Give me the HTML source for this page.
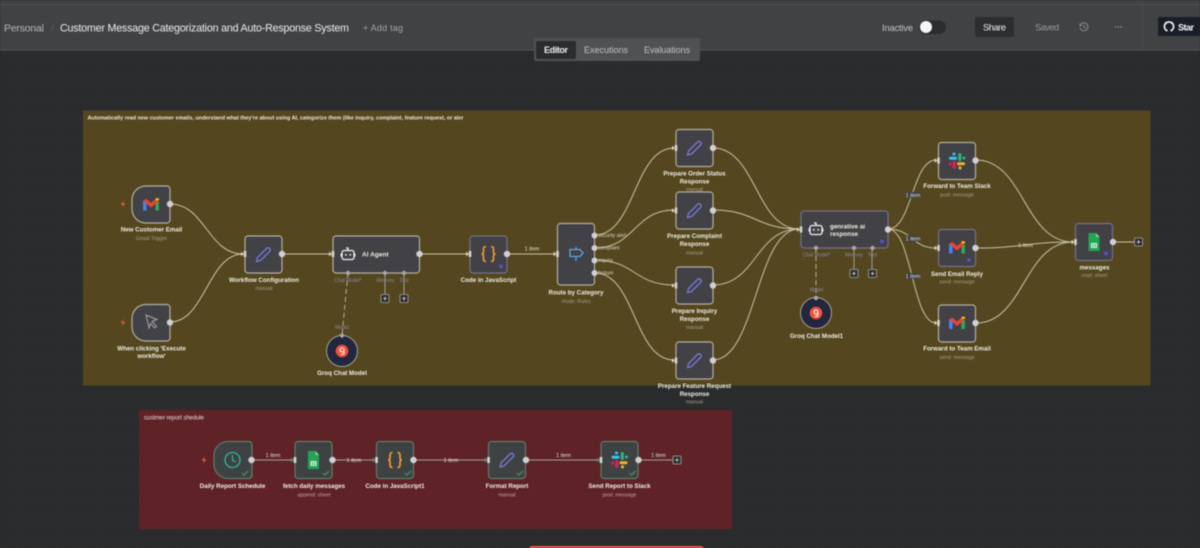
<!DOCTYPE html>
<html><head><meta charset="utf-8"><title>Workflow</title>
<style>
html,body{margin:0;padding:0;width:1200px;height:548px;overflow:hidden;background:#2a2b2c}
svg{display:block;filter:blur(.4px)}
text{font-family:"Liberation Sans",sans-serif}
.l{font-size:6.2px;font-weight:700;fill:#efece0;text-anchor:middle}
.s{font-size:5.2px;fill:#a39d88;text-anchor:middle}
.s2{font-size:5.2px;fill:#bfa6a6;text-anchor:middle}
.p{font-size:5px;fill:#8d88a8;text-anchor:middle}
.o{font-size:5px;fill:#d8d4c4}
.i{font-size:5.4px;fill:#e6e3d6;text-anchor:middle}
.e{fill:none;stroke:#c8c2a4;stroke-width:1}
.r{fill:none;stroke:#98a596;stroke-width:1}
.n{fill:#414146;stroke:#b3b0a0;stroke-width:1.2}
.np{fill:#414146;stroke:#75708f;stroke-width:1.2}
.ng{fill:#3f4243;stroke:#5f7d66;stroke-width:1.2}
.d{fill:#d0d0d4}
.t{fill:#dcdcdc}
</style></head>
<body>
<svg width="1200" height="548" viewBox="0 0 1200 548" xmlns="http://www.w3.org/2000/svg">
<defs>
<pattern id="dots" width="5" height="5" patternUnits="userSpaceOnUse"><rect width="5" height="5" fill="#2a2b2c"/><rect x="2" y="2" width="1" height="1" fill="#313233"/></pattern>
<g id="pencil"><path d="M-7 7L-6 3L3-6Q4.500-7.500 6-6Q7.500-4.500 6-3L-3 6Z" fill="none" stroke="#7b78d6" stroke-width="1.300"/></g>
<g id="gmail" fill="none" stroke-width="3.500"><path d="M-6.200-4V6" stroke="#4285f4"/><path d="M6.200-3V6" stroke="#34a853"/><path d="M-6.200-4.500L0 .8L6.200-4.500" stroke="#ea4335"/><path d="M4.500-5.200L8-5.200" stroke="#fbbc04" stroke-width="2.200"/></g>
<g id="slack" fill="none" stroke-width="3" stroke-linecap="round"><path d="M-6.500-2.800H-1.500M-3-7V-7" stroke="#36c5f0"/><path d="M2.800-6.500V-1.500M6.800-3H7" stroke="#2eb67d"/><path d="M1.500 2.800H6.500M3 6.800V7" stroke="#ecb22e"/><path d="M-2.800 1.500V6.500M-7 3H-6.800" stroke="#e01e5a"/></g>
<g id="sheet"><path d="M-5.500-9H2L5.500-5V9H-5.500Z" fill="#23a455"/><path d="M2-9L5.500-5H2Z" fill="#8ed1a5"/><rect x="-3" y="1" width="6" height="5" fill="#e6f4ea"/><rect x="-1.900" y="2" width="1.500" height="1.200" fill="#23a455"/><rect x=".4" y="2" width="1.500" height="1.200" fill="#23a455"/><rect x="-1.900" y="3.900" width="1.500" height="1.200" fill="#23a455"/><rect x=".4" y="3.900" width="1.500" height="1.200" fill="#23a455"/></g>
<g id="code" fill="none" stroke="#f5a02a" stroke-width="1.600"><path d="M-2.500-7.500Q-5-7.500-5-5V-2Q-5 0-7 0Q-5 0-5 2V5Q-5 7.500-2.500 7.500"/><path d="M2.500-7.500Q5-7.500 5-5V-2Q5 0 7 0Q5 0 5 2V5Q5 7.500 2.500 7.500"/></g>
<g id="robot" fill="none" stroke="#f2f2f2" stroke-width="1.300"><rect x="-6" y="-3.500" width="12" height="9" rx="2"/><path d="M-2-6H0V-3.500M-6.800-.5V2.500M6.800-.5V2.500"/><path d="M-2.200 0V1.600M2.200 0V1.600" stroke-width="1.600"/></g>
<g id="groq"><circle r="15.500" fill="#22263e" stroke="#a5a28f" stroke-width="1"/><circle r="6.300" fill="#f0503c"/><circle cy="-1" r="2" fill="none" stroke="#fff" stroke-width="1.100"/><path d="M2-1V1.500Q2 3.500 0 3.500H-1.200" fill="none" stroke="#fff" stroke-width="1.100"/></g>
<g id="in"><path d="M-4-2.300L-1 0L-4 2.300Z" fill="#d8d5c6"/><rect x="-1.300" y="-3" width="2.600" height="6" fill="#d8d5c6"/></g>
<g id="ing"><path d="M-4-2.300L-1 0L-4 2.300Z" fill="#3ea35f"/><rect x="-1.300" y="-3" width="2.600" height="6" fill="#d8d8d8"/></g>
<g id="plus"><rect x="-4" y="-4" width="8" height="8" rx="1" fill="#2d2e33" stroke="#a9a79a" stroke-width=".8"/><path d="M-1.700 0H1.700M0-1.700V1.700" stroke="#e0e0e0" stroke-width=".8"/></g>
<g id="di"><path d="M0-2.800L2.800 0L0 2.800L-2.800 0Z" fill="#a9a7ac"/></g>
<g id="bolt"><path d="M1-3.500L-2.500.5H0L-1 3.500L2.500-.5H0Z" fill="#e0603f"/></g>
<g id="check"><path d="M-3 0L-1 2L3-2" fill="none" stroke="#4d9a6b" stroke-width="1"/></g>
<g id="pin"><rect x="-1.700" y="-1.700" width="3.400" height="3.400" fill="#5b52c8"/></g>
</defs>

<!-- canvas -->
<rect width="1200" height="548" fill="url(#dots)"/>

<!-- header -->
<rect width="1200" height="49.500" fill="#414244"/>
<rect y="4" width="1200" height="1" fill="#4c4d4f"/>
<rect y="49.500" width="1200" height="1" fill="#535456"/>
<rect x="1142" y="5" width="1" height="45" fill="#4c4d4f"/>
<text x="4" y="31.500" font-size="10.500" fill="#b5b6b8" textLength="40">Personal</text>
<text x="51" y="31" font-size="10" fill="#58595b">/</text>
<text x="60" y="31.500" font-size="10.700" fill="#ececec" textLength="289">Customer Message Categorization and Auto-Response System</text>
<text x="363" y="31" font-size="9" fill="#a5a6a8" textLength="40">+ Add tag</text>

<rect x="534" y="38" width="166" height="23" rx="2" fill="#505154"/>
<rect x="536" y="41" width="40" height="18" rx="2" fill="#2b2c2f"/>
<text x="544" y="53" font-size="9" font-weight="700" fill="#ededed" textLength="24">Editor</text>
<text x="584" y="53" font-size="9" fill="#c0c1c3" textLength="44">Executions</text>
<text x="644" y="53" font-size="9" fill="#c0c1c3" textLength="46">Evaluations</text>

<text x="882" y="31" font-size="9.300" fill="#c4c5c7" textLength="31">Inactive</text>
<rect x="919" y="20.500" width="27" height="13.500" rx="6.700" fill="#2c2d2e"/>
<circle cx="926" cy="27" r="6" fill="#f5f5f5"/>
<rect x="975" y="17" width="39" height="20" rx="2" fill="#2d2e30"/>
<text x="983" y="30.500" font-size="9.300" fill="#ececec" textLength="23">Share</text>
<text x="1035" y="30.500" font-size="9.300" fill="#97989a" textLength="24">Saved</text>
<g fill="none" stroke="#8f9092" stroke-width=".9"><path d="M1080.700 24.500A4 4 0 1 1 1080 27.500"/><path d="M1084 24.800V27.300L1086 28.300"/><path d="M1080 23.500V25.500H1082"/></g>
<g fill="#a2a3a5"><circle cx="1115.500" cy="27" r=".7"/><circle cx="1118.300" cy="27" r=".7"/><circle cx="1121" cy="27" r=".7"/></g>
<rect x="1158" y="17" width="42" height="19" rx="1" fill="#1a1e27"/>
<circle cx="1169" cy="26.500" r="4.600" fill="none" stroke="#f2f2f2" stroke-width="1.600"/>
<path d="M1167.500 29H1170.500V32H1167.500Z" fill="#1a1e27"/>
<path d="M1165 22.500L1167 23.500M1173 22.500L1171 23.500" stroke="#f2f2f2" stroke-width="1.200"/>
<text x="1178" y="30.500" font-size="9" font-weight="700" fill="#f2f2f2" textLength="16">Star</text>

<!-- stickies -->
<rect x="83" y="110.500" width="1067.500" height="275" rx="1" fill="#54471f"/>
<text x="87.500" y="119.500" font-size="5.400" font-weight="700" fill="#ece9dc" textLength="376">Automatically read new customer emails, understand what they're about using AI, categorize them (like inquiry, complaint, feature request, or aler</text>
<rect x="139" y="410" width="593" height="119" rx="1" fill="#5f2227"/>
<text x="144" y="419.500" font-size="6" fill="#e9dcdc" textLength="60">custmer report shedule</text>
<rect x="529" y="546" width="175" height="6" rx="3" fill="#f0564c"/>

<!-- edges yellow -->
<g class="e">
<path class="e" d="M170 204C205 204 208 254 243 254"/>
<path class="e" d="M170 322C205 322 208 254 243 254"/>
<path class="e" d="M282 254H331"/>
<path class="e" d="M420 254H468"/>
<path class="e" d="M507 254H555"/>
<path class="e" d="M595 235C635 235 634 148 674 148"/>
<path class="e" d="M595 248C635 248 634 210 674 210"/>
<path class="e" d="M595 260C635 260 634 285 674 285"/>
<path class="e" d="M595 273C635 273 634 360 674 360"/>
<path class="e" d="M713 148C756 148 756 229 799 229"/>
<path class="e" d="M713 210C756 210 756 229 799 229"/>
<path class="e" d="M713 285C756 285 756 229 799 229"/>
<path class="e" d="M713 360C756 360 756 229 799 229"/>
<path class="e" d="M888 229C912 229 912 160 936 160"/>
<path class="e" d="M888 229C912 229 912 248 936 248"/>
<path class="e" d="M888 229C912 229 912 323 936 323"/>
<path class="e" d="M976 160C1024 160 1024 242 1073 242"/>
<path class="e" d="M976 248C1024 248 1024 242 1073 242"/>
<path class="e" d="M976 323C1024 323 1024 242 1073 242"/>
<path class="e" d="M1113 242H1134"/>
</g>
<!-- dashed + connectors -->
<g fill="none" stroke="#b5b09a" stroke-width="1" stroke-dasharray="5 3"><path d="M348 273L342 335"/><path d="M816 248V298"/></g>
<g stroke="#a9a79a" stroke-width=".9"><path d="M385 273V294M404 273V294M854 248V269M872 248V269"/></g>

<!-- nodes yellow -->
<path class="n" d="M146 186H167a3 3 0 0 1 3 3V220a3 3 0 0 1-3 3H146a14 14 0 0 1-14-14V200a14 14 0 0 1 14-14Z"/>
<path class="n" d="M146 304.500H167a3 3 0 0 1 3 3V338a3 3 0 0 1-3 3H146a14 14 0 0 1-14-14V318.500a14 14 0 0 1 14-14Z"/>
<rect class="n" x="245" y="236" width="37" height="37" rx="3"/>
<rect class="n" x="333" y="236" width="86.500" height="37" rx="3"/>
<rect class="np" x="470" y="236" width="37" height="37" rx="3"/>
<rect class="n" x="557.500" y="223.500" width="37" height="61.500" rx="3"/>
<rect class="n" x="676" y="129.500" width="37" height="37" rx="3"/>
<rect class="n" x="676" y="192" width="37" height="37" rx="3"/>
<rect class="n" x="676" y="267" width="37" height="37" rx="3"/>
<rect class="n" x="676" y="342" width="37" height="37" rx="3"/>
<rect class="np" x="801" y="211" width="87" height="37" rx="3"/>
<rect class="n" x="938.500" y="142.500" width="37" height="37" rx="3"/>
<rect class="np" x="938.500" y="229.500" width="37" height="37" rx="3"/>
<rect class="n" x="938.500" y="305" width="37" height="37" rx="3"/>
<rect class="np" x="1075.500" y="223.500" width="37" height="37" rx="3"/>

<!-- icons yellow -->
<use href="#bolt" x="123" y="204"/><use href="#bolt" x="123" y="322.500"/>
<use href="#gmail" x="151" y="204.500"/>
<path d="M146 315L157 319.500L152 321.500L156.500 326.500L154.500 328L150.500 323.500L149 328Z" fill="none" stroke="#a8a8ab" stroke-width="1"/>
<use href="#pencil" x="263.500" y="254.500"/>
<use href="#robot" x="348" y="254"/>
<use href="#code" x="488.500" y="254"/>
<g fill="none" stroke="#5da5e8" stroke-width="1.300"><path d="M570 249.500H580L583 253L580 256.500H570Z"/><path d="M576 247V249.500M576 256.500V261"/></g>
<use href="#pencil" x="694.500" y="148"/><use href="#pencil" x="694.500" y="210.500"/><use href="#pencil" x="694.500" y="285.500"/><use href="#pencil" x="694.500" y="360.500"/>
<use href="#robot" x="816" y="229"/>
<use href="#slack" x="957" y="161"/>
<use href="#gmail" x="957" y="247.500"/><use href="#gmail" x="957" y="323"/>
<use href="#sheet" x="1094" y="242"/>
<use href="#groq" x="342" y="351"/><use href="#groq" x="816" y="313"/>
<use href="#pin" x="501" y="266.500"/><use href="#pin" x="882" y="241.500"/><use href="#pin" x="969" y="260"/><use href="#pin" x="1106" y="253.500"/>

<!-- ports -->
<g class="d"><circle cx="170" cy="204" r="3.200"/><circle cx="170" cy="322.500" r="3.200"/><circle cx="282" cy="254" r="3.200"/><circle cx="419.500" cy="254" r="3.200"/><circle cx="507" cy="254" r="3.200"/><circle cx="594.500" cy="235.500" r="3"/><circle cx="594.500" cy="248" r="3"/><circle cx="594.500" cy="260.500" r="3"/><circle cx="594.500" cy="273" r="3"/><circle cx="713" cy="148" r="3.200"/><circle cx="713" cy="210.500" r="3.200"/><circle cx="713" cy="285.500" r="3.200"/><circle cx="713" cy="360.500" r="3.200"/><circle cx="888" cy="229.500" r="3.200"/><circle cx="975.500" cy="160.500" r="3.200"/><circle cx="975.500" cy="248" r="3.200"/><circle cx="975.500" cy="323" r="3.200"/><circle cx="1113" cy="242" r="3.200"/></g>
<use href="#in" x="245" y="254"/><use href="#in" x="333" y="254"/><use href="#in" x="470" y="254"/><use href="#in" x="557.500" y="254"/>
<use href="#in" x="676" y="148"/><use href="#in" x="676" y="210.500"/><use href="#in" x="676" y="285.500"/><use href="#in" x="676" y="360.500"/>
<use href="#in" x="801" y="229.500"/><use href="#in" x="938.500" y="160.500"/><use href="#in" x="938.500" y="248"/><use href="#in" x="938.500" y="323"/><use href="#in" x="1075.500" y="242"/>
<use href="#di" x="348" y="273"/><use href="#di" x="385" y="273"/><use href="#di" x="404" y="273"/><use href="#di" x="342" y="335.500"/>
<use href="#di" x="816" y="248"/><use href="#di" x="854" y="248"/><use href="#di" x="872.500" y="248"/><use href="#di" x="816" y="298"/>
<use href="#plus" x="385" y="298.500"/><use href="#plus" x="404" y="298.500"/><use href="#plus" x="854" y="273.500"/><use href="#plus" x="872.500" y="273.500"/><use href="#plus" x="1138.500" y="242"/>

<!-- labels yellow -->
<text class="l" x="151.500" y="231.500">New Customer Email</text>
<text class="s" x="151.500" y="240">Gmail Trigger</text>
<text class="l" x="151.500" y="350.500">When clicking 'Execute</text>
<text class="l" x="151.500" y="358">workflow'</text>
<text class="l" x="264" y="282">Workflow Configuration</text>
<text class="s" x="264" y="290">manual</text>
<text x="362" y="256.500" font-size="6.500" font-weight="700" fill="#efece0">AI Agent</text>
<text class="p" x="348" y="282">Chat Model*</text><text class="p" x="385.500" y="282">Memory</text><text class="p" x="404" y="282">Tool</text>
<text class="p" x="342" y="329">Model</text>
<text class="l" x="342" y="375">Groq Chat Model</text>
<text class="l" x="488.500" y="282">Code in JavaScript</text>
<text class="i" x="532" y="250.500">1 item</text>
<text class="l" x="576" y="294.500">Route by Category</text>
<text class="s" x="576" y="303">mode: Rules</text>
<text class="o" x="598" y="237">security alert</text><text class="o" x="598" y="249.500">complaint</text><text class="o" x="598" y="262">inquiry</text><text class="o" x="598" y="274.500">feature</text>
<text class="l" x="694.500" y="175.500">Prepare Order Status</text><text class="l" x="694.500" y="183.500">Response</text><text class="s" x="694.500" y="191">manual</text>
<text class="l" x="694.500" y="238">Prepare Complaint</text><text class="l" x="694.500" y="246">Response</text><text class="s" x="694.500" y="254.500">manual</text>
<text class="l" x="694.500" y="313">Prepare Inquiry</text><text class="l" x="694.500" y="321">Response</text><text class="s" x="694.500" y="329">manual</text>
<text class="l" x="694.500" y="388">Prepare Feature Request</text><text class="l" x="694.500" y="396">Response</text><text class="s" x="694.500" y="403.500">manual</text>
<text x="830" y="228.500" font-size="6.300" font-weight="700" fill="#efece0">genrative ai</text>
<text x="830" y="236" font-size="6.300" font-weight="700" fill="#efece0">response</text>
<text class="p" x="816.500" y="256.500">Chat Model*</text><text class="p" x="854" y="256.500">Memory</text><text class="p" x="872.500" y="256.500">Tool</text>
<text class="p" x="816.500" y="291.500">Model</text>
<text class="l" x="816.500" y="338">Groq Chat Model1</text>
<g fill="#3c3f47"><rect x="906" y="192" width="14" height="6"/><rect x="906" y="235.500" width="14" height="6"/><rect x="906" y="273" width="14" height="6"/></g>
<text class="i" x="913" y="197">1 item</text><text class="i" x="913" y="240.500">1 item</text><text class="i" x="913" y="278">1 item</text><text class="i" x="1025.500" y="247">1 item</text>
<text class="l" x="957" y="188">Forward to Team Slack</text><text class="s" x="957" y="196.500">post: message</text>
<text class="l" x="957" y="276">Send Email Reply</text><text class="s" x="957" y="283.500">send: message</text>
<text class="l" x="957" y="350.500">Forward to Team Email</text><text class="s" x="957" y="359">send: message</text>
<text class="l" x="1094.500" y="269.500">messages</text><text class="s" x="1094.500" y="277">read: sheet</text>

<!-- red row -->
<path class="r" d="M251 460H293"/><path class="r" d="M332 460H374"/><path class="r" d="M414 460H486"/><path class="r" d="M526 460H599"/><path class="r" d="M638 460H673"/>
<path class="ng" d="M228 441.500H249a3 3 0 0 1 3 3V475.500a3 3 0 0 1-3 3H228a14 14 0 0 1-14-14V455.500a14 14 0 0 1 14-14Z"/>
<rect class="ng" x="295" y="441.500" width="37" height="37" rx="3"/>
<rect class="ng" x="376.500" y="441.500" width="37" height="37" rx="3"/>
<rect class="ng" x="488.500" y="441.500" width="37" height="37" rx="3"/>
<rect class="ng" x="601" y="441.500" width="37" height="37" rx="3"/>
<use href="#bolt" x="204" y="460"/>
<circle cx="232.500" cy="460" r="7.500" fill="none" stroke="#2fb89a" stroke-width="1.300"/><path d="M232.500 455V460.500L236 462" fill="none" stroke="#2fb89a" stroke-width="1.200"/>
<use href="#sheet" x="313.500" y="460"/>
<use href="#code" x="395" y="460"/>
<use href="#pencil" x="507" y="460"/>
<use href="#slack" x="619.500" y="460"/>
<use href="#check" x="245" y="473"/><use href="#check" x="326" y="473"/><use href="#check" x="408" y="473"/><use href="#check" x="520" y="473"/><use href="#check" x="632.500" y="473"/>
<g class="d"><circle cx="251.500" cy="460" r="3.200"/><circle cx="332.500" cy="460" r="3.200"/><circle cx="413.500" cy="460" r="3.200"/><circle cx="526" cy="460" r="3.200"/><circle cx="638.500" cy="460" r="3.200"/></g>
<use href="#ing" x="295" y="460"/><use href="#ing" x="376.500" y="460"/><use href="#ing" x="488.500" y="460"/><use href="#ing" x="601" y="460"/>
<use href="#plus" x="677" y="460"/>
<text class="i" x="273" y="457">1 item</text><text class="i" x="354" y="462">1 item</text><text class="i" x="451" y="462">1 item</text><text class="i" x="563.500" y="457">1 item</text><text class="i" x="658.500" y="457">1 item</text>
<text class="l" x="232.500" y="488">Daily Report Schedule</text>
<text class="l" x="314" y="488">fetch daily messages</text><text class="s2" x="314" y="496.500">append: sheet</text>
<text class="l" x="395" y="488">Code in JavaScript1</text>
<text class="l" x="507" y="488">Format Report</text><text class="s2" x="507" y="496.500">manual</text>
<text class="l" x="619.500" y="488">Send Report to Slack</text><text class="s2" x="619.500" y="496.500">post: message</text>
</svg>
</body></html>
